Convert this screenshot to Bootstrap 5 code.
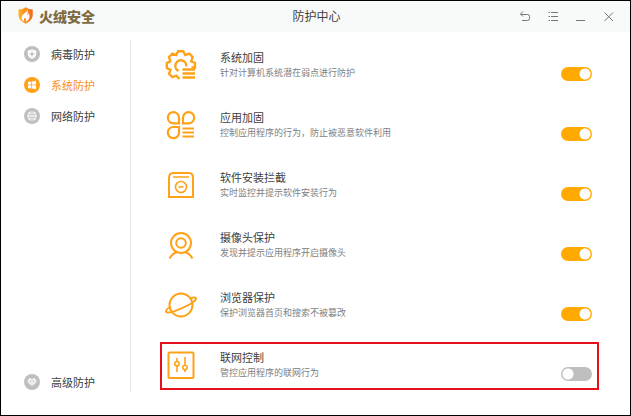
<!DOCTYPE html>
<html lang="zh-CN">
<head>
<meta charset="utf-8">
<meta name="viewport" content="width=device-width, initial-scale=1">
<title>防护中心</title>
<link rel="stylesheet" href="https://cdn.jsdelivr.net/npm/bootstrap@5.3.0/dist/css/bootstrap.min.css">
<style>
  :root { --amber: #ffa21a; --toggle: #ffaa00; --muted: #bfbfbf; }
  body { font-family: "Noto Sans CJK SC", sans-serif; font-size: 11px; line-height: 16px; color: #404040; background: #fff; }
  svg { display: block; flex: none; }
  .app-window { border: 1px solid #000; }
  .title-bar { display: grid; grid-template-columns: 1fr auto 1fr; height: 31px; padding: 0 14px 0 16px; background: #f8f9f9; }
  .brand { font-size: 14px; font-weight: 900; color: #7d6b42; gap: 5px; padding-bottom: 2px; }
  .page-title { font-size: 12px; font-weight: 400; }
  .win-btn { color: #777; width: 16px; height: 16px; }
  .window-tools { gap: 12px; }
  .side-nav { width: 130px; margin: 8px 0 23px; padding: 5px 0 2px 23px; border-right: 1px solid #e8e8e8; }
  .side-link { color: #404040; text-decoration: none; gap: 11px; height: 17px; margin-bottom: 14px; }
  .side-link.active { color: #f5911e; }
  .side-link:last-child { margin-bottom: 0; }
  .feature-list { padding: 10px 31px 25px 29px; }
  .feature { height: 48px; border: 2px solid transparent; padding: 0 5px 2px 3px; }
  .feature.highlight { border-color: #e5101c; }
  .feature-icon { color: var(--amber); margin-right: 23px; }
  .feature-name { font-size: 11px; font-weight: 400; line-height: 16px; }
  .feature-desc { font-size: 9px; line-height: 16px; color: #808080; }
  .form-switch.switch-wrap { min-height: 0; padding: 0; margin: 18px 0 0; }
  .form-switch .form-check-input.toggle { float: none; display: block; width: 31px; height: 14px; margin: 0; border: 0; cursor: pointer;
    background-color: var(--muted); background-image: radial-gradient(circle, #fff 5px, transparent 6px); background-size: 14px 14px; background-position: left center; }
  .form-switch .form-check-input.toggle:checked { background-color: var(--toggle); background-image: radial-gradient(circle, #fff 5px, transparent 6px); background-position: right center; }
</style>
<script src="https://cdn.jsdelivr.net/npm/bootstrap@5.3.0/dist/js/bootstrap.bundle.min.js" defer></script>
</head>
<body>
<div class="app-window d-flex flex-column min-vh-100">
  <header class="title-bar align-items-center">
    <div class="brand d-flex align-items-center">
      <svg width="17" height="17" viewBox="0 0 17 17" aria-hidden="true">
        <defs><linearGradient id="flame" x1="0" x2="1"><stop offset="0" stop-color="#ffb52b"/><stop offset=".55" stop-color="#fb8a1e"/><stop offset="1" stop-color="#f06a1a"/></linearGradient></defs>
        <path fill="url(#flame)" d="M1.500 2.500Q5.500 2.500 8.700.3Q11.500 2.500 15.700 2.500V9Q15.200 13.500 8.600 16.700Q2 13.500 1.500 9Z"/>
        <path fill="#fff" d="M10.300 2.500C10.300 5 7 6.300 5.300 8.500C3.800 10.800 4.600 13.200 7.500 15C6.500 13.300 6.800 11.800 8 10.300C8.300 11.800 9.600 12 9.300 14.800C12.800 12.300 13.400 9 11.400 5.800C11.300 7.200 10.800 8 10 8.600C10.700 6.500 11.100 4.500 10.300 2.500Z"/>
      </svg>
      <span>火绒安全</span>
    </div>
    <h1 class="page-title m-0">防护中心</h1>
    <div class="window-tools d-flex justify-content-end">
      <button type="button" class="win-btn btn p-0 border-0" aria-label="返回"><svg width="16" height="16" viewBox="0 0 16 16" fill="none" stroke="currentColor"><path d="M7 2.500L4.500 5L7 7.500M4.500 5.500H11.500Q13.500 5.500 13.500 7.500V9.500Q13.500 11.500 11.500 11.500H6"/></svg></button>
      <button type="button" class="win-btn btn p-0 border-0" aria-label="菜单"><svg width="16" height="16" viewBox="0 0 16 16" fill="none" stroke="currentColor"><path d="M7 3.500H14M7 7.500H14M7 11.500H14M4.500 3.500H6M4.500 7.500H6M4.500 11.500H6"/></svg></button>
      <button type="button" class="win-btn btn p-0 border-0" aria-label="最小化"><svg width="16" height="16" viewBox="0 0 16 16" fill="none" stroke="currentColor"><path d="M4 11.500H13"/></svg></button>
      <button type="button" class="win-btn btn p-0 border-0" aria-label="关闭"><svg width="16" height="16" viewBox="0 0 16 16" fill="none" stroke="currentColor"><path d="M4.500 3.500L13 12M13 3.500L4.500 12"/></svg></button>
    </div>
  </header>

  <div class="d-flex flex-grow-1">
    <nav class="side-nav d-flex flex-column flex-shrink-0" aria-label="防护分类">
      <a href="#" class="side-link d-flex align-items-center">
        <svg width="16" height="16" viewBox="0 0 16 16"><circle cx="8" cy="8" r="8" fill="#bfbfbf"/><path fill="#fff" d="M3.800 4.500Q6.500 4.200 8 3.200Q9.500 4.200 12.200 4.500V9Q11.500 11.800 8 13Q4.500 11.800 3.800 9Z"/><path d="M8 5.500V10.500M5.500 8H10.500" stroke="#b0b0b0"/></svg>
        <span>病毒防护</span></a>
      <a href="#" class="side-link active d-flex align-items-center" aria-current="page">
        <svg width="16" height="16" viewBox="0 0 16 16"><circle cx="8" cy="8" r="8" fill="#ffa21a"/><path fill="#fff" d="M4 5L7.300 4.500V7.600H4ZM8 4.400L12 3.800V7.600H8ZM4 8.300H7.300V11.500L4 11ZM8 8.300H12V12.200L8 11.600Z"/></svg>
        <span>系统防护</span></a>
      <a href="#" class="side-link d-flex align-items-center">
        <svg width="16" height="16" viewBox="0 0 16 16"><circle cx="8" cy="8" r="8" fill="#bfbfbf"/><circle cx="8" cy="8" r="4.800" fill="#f5f5f5"/><path fill="none" stroke="#bfbfbf" stroke-width=".6" d="M3 6.500H13M3 9.500H13M8 3V13M8 3.200Q3.600 8 8 12.800Q12.400 8 8 3.200"/></svg>
        <span>网络防护</span></a>
      <a href="#" class="side-link d-flex align-items-center mt-auto">
        <svg width="16" height="16" viewBox="0 0 16 16"><circle cx="8" cy="8" r="8" fill="#bfbfbf"/><path fill="#fff" d="M5.200 4.500H10.800L13 7.200L8 12.500L3 7.200Z"/><path fill="none" stroke="#bfbfbf" stroke-width=".6" d="M3 7.200H13M6.200 7.200L8 12.500L9.800 7.200M6.200 7.200L8 4.500L9.800 7.200"/></svg>
        <span>高级防护</span></a>
    </nav>

    <main class="feature-list d-flex flex-column justify-content-between flex-grow-1">
      <section class="feature d-flex align-items-center">
        <svg class="feature-icon" width="32" height="32" viewBox="0 0 32 32" fill="none" stroke="currentColor" stroke-width="2.400"><path d="M14.500 30L11.300 26.700L7.300 28.200L4 24.800L5.500 20.800L1.800 19V14L5.300 12.300L4 8L7.500 4.600L11.300 6L13.200 2.200H18.300L20.200 6L24.200 4.600L27.700 8L26.200 12.300L30 14V18.500H26.500"/><path d="M13.500 21.800A5.500 5.500 0 1 1 21.300 17.500M17.500 20.500H30M17.500 24.500H30M17.500 28.500H30"/></svg>
        <div class="flex-grow-1"><h2 class="feature-name m-0"><label for="sw1">系统加固</label></h2><p class="feature-desc m-0">针对计算机系统潜在弱点进行防护</p></div>
        <div class="form-check form-switch switch-wrap"><input class="form-check-input toggle" type="checkbox" role="switch" id="sw1" checked></div>
      </section>
      <section class="feature d-flex align-items-center">
        <svg class="feature-icon" width="32" height="32" viewBox="0 0 32 32" fill="none" stroke="currentColor" stroke-width="2.200"><path d="M14 14.300H8.500A5.600 5.600 0 1 1 14 8.700ZM18 14.300V8.700A5.600 5.600 0 1 1 23.500 14.300ZM14 18V23.700A5.600 5.600 0 1 1 8.500 18ZM17.500 19.500H29M17.500 23.500H29M17.500 27.500H29"/></svg>
        <div class="flex-grow-1"><h2 class="feature-name m-0"><label for="sw2">应用加固</label></h2><p class="feature-desc m-0">控制应用程序的行为，防止被恶意软件利用</p></div>
        <div class="form-check form-switch switch-wrap"><input class="form-check-input toggle" type="checkbox" role="switch" id="sw2" checked></div>
      </section>
      <section class="feature d-flex align-items-center">
        <svg class="feature-icon" width="32" height="32" viewBox="0 0 32 32" fill="none" stroke="currentColor" stroke-width="2"><path d="M8 4H24Q28 4 28 9V28H4V9Q4 4 8 4Z"/><path stroke-width="1.500" d="M8 8H24"/><circle cx="16" cy="18" r="5.500" stroke-width="1.600"/><path stroke-width="1.600" d="M13.500 18H18.500"/></svg>
        <div class="flex-grow-1"><h2 class="feature-name m-0"><label for="sw3">软件安装拦截</label></h2><p class="feature-desc m-0">实时监控并提示软件安装行为</p></div>
        <div class="form-check form-switch switch-wrap"><input class="form-check-input toggle" type="checkbox" role="switch" id="sw3" checked></div>
      </section>
      <section class="feature d-flex align-items-center">
        <svg class="feature-icon" width="32" height="32" viewBox="0 0 32 32" fill="none" stroke="currentColor" stroke-width="2"><circle cx="16" cy="14" r="10"/><circle cx="16" cy="14" r="4.800"/><path d="M4.500 29.500Q7.500 24 12 23.300M20 23.300Q24.500 24 27.500 29.500"/></svg>
        <div class="flex-grow-1"><h2 class="feature-name m-0"><label for="sw4">摄像头保护</label></h2><p class="feature-desc m-0">发现并提示应用程序开启摄像头</p></div>
        <div class="form-check form-switch switch-wrap"><input class="form-check-input toggle" type="checkbox" role="switch" id="sw4" checked></div>
      </section>
      <section class="feature d-flex align-items-center">
        <svg class="feature-icon" width="32" height="32" viewBox="0 0 32 32" fill="none" stroke="currentColor" stroke-width="2"><circle cx="16" cy="16" r="11.500"/><path d="M25 9.500C28 8.300 30.800 8 31 9.500C31.300 12.500 24 16 16.500 19.300C9 22.500 1.500 25.300 1 22.300C.8 20.800 2.500 19.500 5 18"/></svg>
        <div class="flex-grow-1"><h2 class="feature-name m-0"><label for="sw5">浏览器保护</label></h2><p class="feature-desc m-0">保护浏览器首页和搜索不被篡改</p></div>
        <div class="form-check form-switch switch-wrap"><input class="form-check-input toggle" type="checkbox" role="switch" id="sw5" checked></div>
      </section>
      <section class="feature highlight d-flex align-items-center">
        <svg class="feature-icon" width="32" height="32" viewBox="0 0 32 32" fill="none" stroke="currentColor" stroke-width="2"><rect x="3.500" y="3.500" width="25" height="25.500" rx="1"/><g stroke-width="1.600"><path d="M12 9V12.500M12 17V23M20 8V16M20 20.500V23"/><circle cx="12" cy="14.700" r="2.200"/><circle cx="20" cy="18.500" r="2.200"/></g></svg>
        <div class="flex-grow-1"><h2 class="feature-name m-0"><label for="sw6">联网控制</label></h2><p class="feature-desc m-0">管控应用程序的联网行为</p></div>
        <div class="form-check form-switch switch-wrap"><input class="form-check-input toggle" type="checkbox" role="switch" id="sw6"></div>
      </section>
    </main>
  </div>
</div>
</body>
</html>
